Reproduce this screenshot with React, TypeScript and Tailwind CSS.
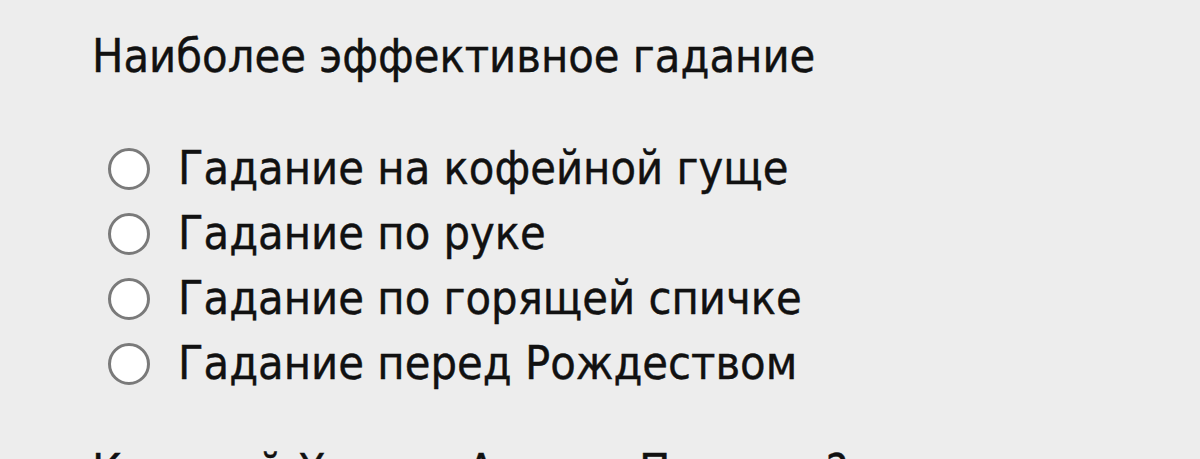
import React from 'react';

const options = [
  'Гадание на кофейной гуще',
  'Гадание по руке',
  'Гадание по горящей спичке',
  'Гадание перед Рождеством',
];

export default function App() {
  return (
    <div
      className="min-h-screen bg-[#ededed] pl-[92px] pt-[27px] text-[#111] overflow-hidden [-webkit-text-stroke:0.4px_#111]"
      style={{ fontFamily: '"DejaVu Sans Condensed", "DejaVu Sans", sans-serif' }}
    >
      <p className="text-[46.5px] leading-[58px]">Наиболее эффективное гадание</p>

      {/* Answers */}
      <div className="mt-[51px] pl-[16px] flex flex-col">
        {options.map((o) => (
          <label key={o} className="h-[65px] flex items-center gap-[28px]">
            <input
              type="radio"
              name="q1"
              className="appearance-none w-[42px] h-[42px] rounded-full border-[3px] border-[#7a7a7a] bg-white shrink-0"
            />
            <span className="text-[46.5px] leading-[65px]">{o}</span>
          </label>
        ))}
      </div>

      <p className="mt-[46px] text-[46.5px] leading-[58px]">Который Хозяин Аркана Пустоты?</p>
    </div>
  );
}
